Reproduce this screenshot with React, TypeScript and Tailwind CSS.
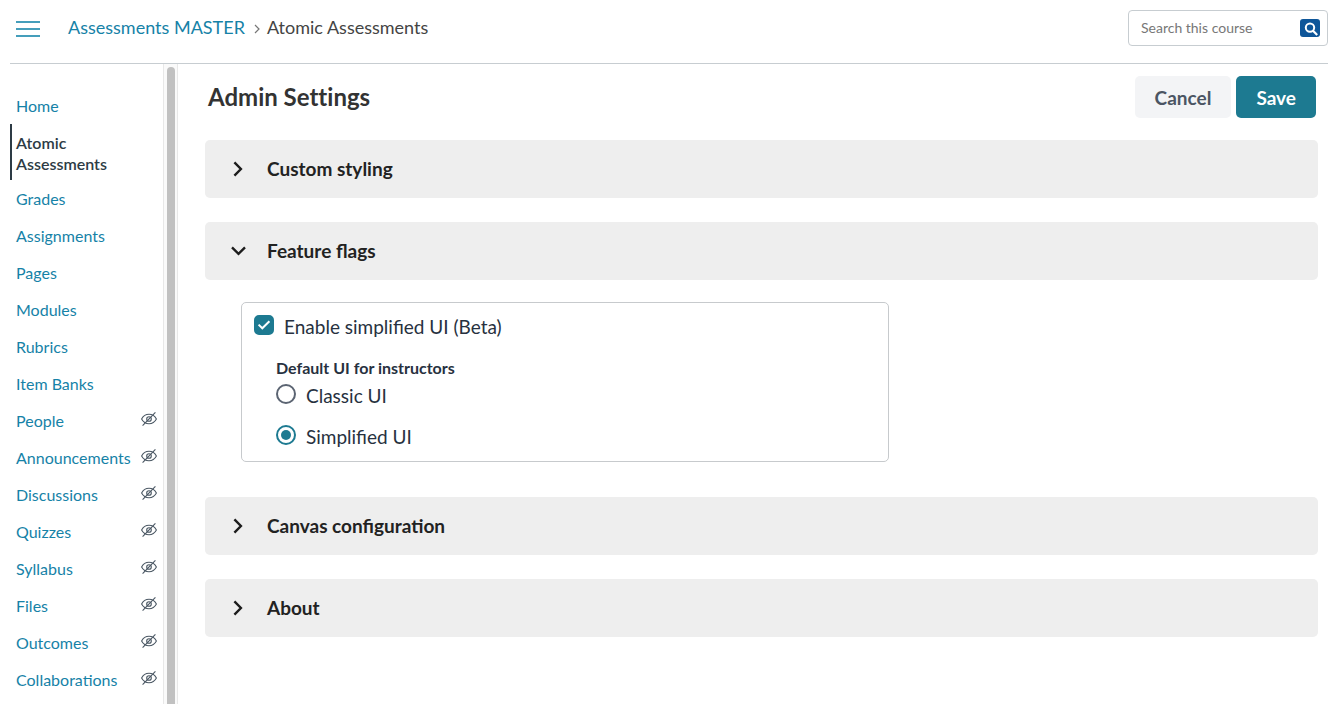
import { useState } from "react";
import type { ReactNode } from "react";

type NavItem = { label: string; active?: boolean; hidden?: boolean };

const navItems: NavItem[] = [
  { label: "Home" },
  { label: "Atomic Assessments", active: true },
  { label: "Grades" },
  { label: "Assignments" },
  { label: "Pages" },
  { label: "Modules" },
  { label: "Rubrics" },
  { label: "Item Banks" },
  { label: "People", hidden: true },
  { label: "Announcements", hidden: true },
  { label: "Discussions", hidden: true },
  { label: "Quizzes", hidden: true },
  { label: "Syllabus", hidden: true },
  { label: "Files", hidden: true },
  { label: "Outcomes", hidden: true },
  { label: "Collaborations", hidden: true },
];

function HiddenIcon() {
  return (
    <svg viewBox="0 0 16 16" className="mb-1 size-4 shrink-0" fill="none" stroke="#4a5763" role="img" aria-label="Hidden from students">
      <path d="M0.6 8C2.2 5 4.8 3.3 8 3.3s5.8 1.7 7.4 4.7c-1.6 3-4.2 4.7-7.4 4.7S2.2 11 0.6 8z" strokeWidth="1.1" />
      <circle cx="8" cy="8" r="2.3" strokeWidth="1.1" />
      <path d="M1.6 14.6 14.4 1.4" strokeWidth="1.1" />
    </svg>
  );
}

function Sidebar() {
  return (
    <nav aria-label="Course navigation" className="w-[153px] shrink-0 pt-[23px]">
      <ul>
        {navItems.map((item) => (
          <li key={item.label}>
            <a
              href="#"
              aria-current={item.active ? "page" : undefined}
              className={
                item.active
                  ? "block border-l-2 border-[#2d3b45] pt-2 pr-8 pb-[6px] pl-1 text-base leading-[21px] font-semibold text-[#2d3b45]"
                  : "flex items-center justify-between py-2 pr-[6px] pl-[6px] text-base leading-[21px] text-[#1682a7]"
              }
            >
              {item.label}
              {item.hidden && <HiddenIcon />}
            </a>
          </li>
        ))}
      </ul>
    </nav>
  );
}

function Section({ title, open, onToggle, children }: { title: string; open: boolean; onToggle: () => void; children?: ReactNode }) {
  return (
    <section>
      <h2>
        <button
          type="button"
          aria-expanded={open}
          onClick={onToggle}
          className="flex w-full items-center gap-[18px] rounded-[5px] bg-[#eeeeee] px-5 py-[17px] text-left text-[19px] leading-6 font-bold text-[#222222]"
        >
          <svg viewBox="0 0 24 24" className="size-6" fill="none" stroke="#1c1c1c" strokeWidth="2.4" aria-hidden="true">
            <path d={open ? "M7 8.4 13.5 14.8 20 8.4" : "M9.4 5.4 15.9 12l-6.5 6.6"} />
          </svg>
          {title}
        </button>
      </h2>
      {open && children}
    </section>
  );
}

function RadioRow({ label, checked, onChange }: { label: string; checked: boolean; onChange: () => void }) {
  return (
    <label className="flex items-start gap-[10px] text-[19px] leading-6 text-[#273140]">
      <span className="grid size-5 shrink-0 place-items-center">
        <input
          type="radio"
          name="default-ui"
          checked={checked}
          onChange={onChange}
          className="peer col-start-1 row-start-1 size-5 appearance-none rounded-full border-2 border-[#5b6472] bg-white checked:border-[#1d7a91]"
        />
        <span className="pointer-events-none col-start-1 row-start-1 hidden size-[10px] rounded-full bg-[#1d7a91] peer-checked:block" />
      </span>
      {label}
    </label>
  );
}

function FeatureFlags() {
  const [enabled, setEnabled] = useState(true);
  const [ui, setUi] = useState("simplified");
  return (
    <div className="mx-9 mt-[22px] mb-[11px] max-w-[648px] rounded-[5px] border border-[#c7cacd] px-3 pt-3 pb-3">
      <label className="flex items-start gap-[10px] text-[19px] leading-6 text-[#273140]">
        <span className="grid size-5 shrink-0 place-items-center">
          <input
            type="checkbox"
            checked={enabled}
            onChange={() => setEnabled(!enabled)}
            className="peer col-start-1 row-start-1 size-5 appearance-none rounded-[5px] border-2 border-[#5b6472] checked:border-[#1d7a91] checked:bg-[#1d7a91]"
          />
          <svg viewBox="0 0 20 20" className="pointer-events-none col-start-1 row-start-1 hidden size-5 peer-checked:block" fill="none" stroke="#fff" strokeWidth="2" aria-hidden="true">
            <path d="M4.6 9.6 8.3 13.3 15.4 6.2" />
          </svg>
        </span>
        {"Enable simplified UI (Beta)"}
      </label>
      <fieldset className="mt-[17px] pl-[22px]">
        <legend className="text-base leading-6 font-bold text-[#273140]">Default UI for instructors</legend>
        <div className="flex flex-col gap-[17px] pt-1">
          <RadioRow label="Classic UI" checked={ui === "classic"} onChange={() => setUi("classic")} />
          <RadioRow label="Simplified UI" checked={ui === "simplified"} onChange={() => setUi("simplified")} />
        </div>
      </fieldset>
    </div>
  );
}

export default function App() {
  const [openSection, setOpenSection] = useState("Feature flags");
  const toggle = (title: string) => setOpenSection(openSection === title ? "" : title);

  return (
    <div className="flex min-h-screen flex-col bg-white pl-[10px] font-['Lato',sans-serif]">
      <header className="mr-[14px] flex h-16 items-start justify-between border-b border-[#c7cdd1]">
        <div className="flex items-start pt-[15px] pl-[6px]">
          <button type="button" aria-label="Course menu" className="mt-[6px] flex w-6 flex-col gap-[5px]">
            <span className="h-[2px] w-full bg-[#459ebb]" />
            <span className="h-[2px] w-full bg-[#459ebb]" />
            <span className="h-[2px] w-full bg-[#459ebb]" />
          </button>
          <nav aria-label="Breadcrumb" className="flex items-center pl-7 text-lg leading-6">
            <a href="#" className="text-[#1682a7]">Assessments MASTER</a>
            <svg viewBox="0 0 8 12" className="mx-[7px] mt-1 h-3 w-2" fill="none" stroke="#777" strokeWidth="1.2" aria-hidden="true">
              <path d="M3 2 7 6 3 10" />
            </svg>
            <span className="text-[#444444]">Atomic Assessments</span>
          </nav>
        </div>
        <form role="search" onSubmit={(e) => e.preventDefault()} className="mt-[10px] flex h-9 w-[200px] items-center rounded-[4px] border border-[#c7cdd1] pr-[7px] pl-3">
          <input type="search" aria-label="Search this course" placeholder="Search this course" className="min-w-0 flex-1 text-sm outline-none placeholder:text-[#777777]" />
          <button type="submit" aria-label="Search" className="rounded-[3px] bg-[#0e5699]">
            <svg viewBox="0 0 20 18" className="h-[18px] w-5" fill="none" stroke="#fff" aria-hidden="true">
              <circle cx="10" cy="8.6" r="4.2" strokeWidth="2" />
              <path d="m13 11.8 4.2 4.2" strokeWidth="2.2" />
            </svg>
          </button>
        </form>
      </header>

      <div className="flex flex-1">
        <Sidebar />
        <div className="flex w-[15px] shrink-0 justify-center border-x border-[#e8e8e8] bg-[#fafafa] pt-[3px]">
          <div className="w-2 rounded-t-full bg-[#c1c1c1]" />
        </div>
        <main className="min-w-0 flex-1 pt-3 pr-6 pl-[27px]">
          <div className="flex items-center justify-between pr-[2px] pl-[3px]">
            <h1 className="text-2xl leading-8 font-bold text-[#333333] [font-variant-ligatures:none]">Admin Settings</h1>
            <div className="flex gap-[5px] text-[19px] leading-6 font-bold">
              <button type="button" className="rounded-[5px] bg-[#f3f4f6] px-5 pt-[10px] pb-2 text-[#4b5563]">Cancel</button>
              <button type="button" className="rounded-[5px] bg-[#1d7a91] px-5 pt-[10px] pb-2 text-white">Save</button>
            </div>
          </div>
          <div className="mt-[22px] flex flex-col gap-6">
            <Section title="Custom styling" open={openSection === "Custom styling"} onToggle={() => toggle("Custom styling")} />
            <Section title="Feature flags" open={openSection === "Feature flags"} onToggle={() => toggle("Feature flags")}>
              <FeatureFlags />
            </Section>
            <Section title="Canvas configuration" open={openSection === "Canvas configuration"} onToggle={() => toggle("Canvas configuration")} />
            <Section title="About" open={openSection === "About"} onToggle={() => toggle("About")} />
          </div>
        </main>
      </div>
    </div>
  );
}
